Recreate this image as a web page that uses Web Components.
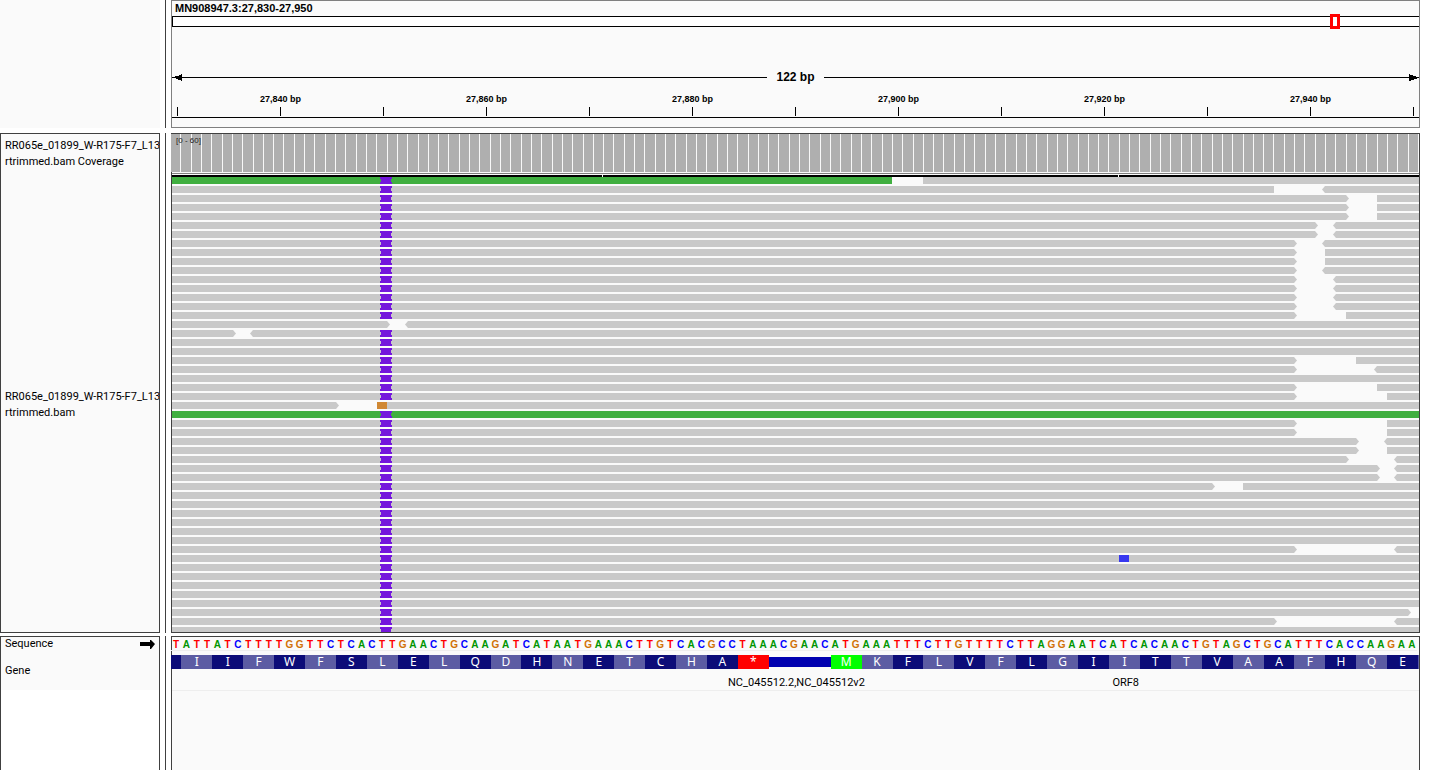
<!DOCTYPE html>
<html lang="en">
<head>
<meta charset="utf-8">
<title>Genome browser</title>
<style>
  body {
    margin: 0;
    background: #fff;
    color: #000;
    font: 11px/16px Roboto, Arial, sans-serif;
  }
</style>
</head>
<body>
<genome-browser></genome-browser>

<script>
const define = (name, css, render) => customElements.define(name, class extends HTMLElement {
  connectedCallback() {
    if (this.shadowRoot) return;
    this.attachShadow({ mode: "open" }).innerHTML = `<style>${css}</style>${render(this)}`;
  }
});

/* A row of the browser: name box, splitter line, data box. */
define("track-panel", `
  :host { display: grid; grid-template-columns: 160px 1px minmax(0, 1fr); column-gap: 5px; --line: #404040; }
  .names, .data { box-sizing: border-box; border: 1px solid var(--line); background: #fafafa; min-width: 0; }
  .names { display: flex; flex-direction: column; overflow: hidden; }
  .split { background: #404040; }
  :host([kind="header"]) { --line: #808080; }
  :host([kind="header"]) .names { border-color: #fafafa; }
  :host([kind="features"]) { flex: 1; }
  :host([kind="features"]) .names { background: #fff; }
  :host([kind="features"]) .names, :host([kind="features"]) .data { border-bottom: 0; }
`, () => `
  <div class="names"><slot name="names"></slot></div>
  <div class="split"></div>
  <div class="data"><slot></slot></div>`);

define("track-name", `
  :host { display: flex; align-items: center; justify-content: space-between; box-sizing: border-box;
          padding: 0 4px; background: #fafafa; white-space: nowrap; }
  :host([track="coverage"]) { height: 39px; margin-bottom: 4px; }
  :host([track="reads"]) { height: 455px; }
  :host([track="sequence"]) { height: 14px; }
  :host([track="gene"]) { height: 39px; }
  svg { display: block; width: 15px; height: 9px; flex: none; }
`, el => `<span><slot></slot></span>${el.getAttribute("track") === "sequence"
    ? `<svg viewBox="0 0 15 9"><path d="M0 2h10V0h1l4 4-4 5h-1V6H0z"/></svg>` : ""}`);

/* Chromosome overview with the marked window. */
define("chromosome-overview", `
  :host { display: block; }
  h1 { margin: 0; padding: 0 3px; font: bold 11px/15px "Liberation Sans", Arial, sans-serif; }
  .bar { position: relative; height: 9px; background: #fff; border: 1px solid #000; border-right: 0; }
  .window { position: absolute; left: 92.85%; top: -3px; width: 4px; height: 9px; border: 3px solid #f00; }
`, () => `<h1><slot></slot></h1><div class="bar"><div class="window"></div></div>`);

/* Span arrow and position ticks. */
const LABELS = ["", "27,840 bp", "", "27,860 bp", "", "27,880 bp", "", "27,900 bp", "", "27,920 bp", "", "27,940 bp", ""];
define("position-ruler", `
  :host { display: block; padding: 42px 0 9px; font-family: "Liberation Sans", Arial, sans-serif; font-weight: bold; }
  .span { display: flex; align-items: center; height: 16px; }
  .span i { flex: 1; height: 1px; background: #000; }
  .span b { width: 57px; text-align: center; font-size: 12px; }
  .span svg { width: 10px; height: 7px; flex: none; }
  .ticks { display: flex; justify-content: space-between; padding: 6px 5px 1px; border-bottom: 1px solid #000; }
  .tick { width: 1px; display: flex; flex-direction: column; align-items: center; white-space: nowrap; font-size: 9px; }
  .tick span { height: 16px; }
  .tick i { width: 1px; height: 9px; background: #000; }
`, () => `
  <div class="span">
    <svg viewBox="0 0 10 7"><path d="M0 3h3V2h4V1h2V0h1v7H9V6H6V5H4V4H0z"/></svg><i></i>
    <b><slot></slot></b>
    <i></i><svg viewBox="0 0 10 7"><path d="M10 3H7V2H4V1H1V0H0v7h2V6h3V5h3V4h2z"/></svg>
  </div>
  <div class="ticks">${LABELS.map(t => `<div class="tick"><span>${t}</span><i></i></div>`).join("")}</div>`);

define("coverage-track", `
  :host { display: block; position: relative; }
  .bars { height: 38px; display: flex; overflow: hidden; margin-left: -1px; background: #afafaf; }
  .bars i { flex: 1 1 0; box-sizing: border-box; border-right: 1px solid #f8f8f8; }
  .bars i:last-child { flex: 0 0 1px; border: 0; }
  .rule { height: 1px; margin: 1px 0; background: #808080; }
  .edge { display: flex; height: 2px; gap: 1px; }
  .edge i { background: #000; }
  span { position: absolute; left: 4px; top: 0; font: 8px/13px "Liberation Sans", Arial, sans-serif; color: #222; }
`, () => `
  <div class="bars">${"<i></i>".repeat(122)}</div>
  <div class="rule"></div>
  <div class="edge"><i style="flex:430"></i><i style="flex:515"></i><i style="flex:300"></i></div>
  <span><slot></slot></span>`);

/* Aligned reads. A gap is [end of left read, its tip, start of right read, its tip]. */
const FROM = 172, TO = 1419;
const full = {};
const gap = (end, endTip, start, startTip, extra) => ({ end, endTip, start, startTip, ...extra });
const toFlat = (a, b) => gap(a, 1, b, 0);
const toTip = (a, b, x) => gap(a, 1, b, 1, x);
const times = (n, v) => Array(n).fill(v);
const READS = [
  gap(892, 0, 923, 0, { left: "green" }),
  gap(1274, 0, 1322, 1),
  ...times(3, toFlat(1349, 1377)),
  ...times(2, toTip(1318, 1333)),
  toTip(1297, 1322), ...times(2, toFlat(1297, 1325)), toTip(1297, 1322),
  ...times(4, toTip(1297, 1333)),
  toFlat(1297, 1346),
  toTip(390, 405, { plain: true }),
  toTip(236, 250),
  full, full,
  toFlat(1297, 1356), toTip(1297, 1374),
  full,
  toFlat(1297, 1377), toFlat(1297, 1387),
  gap(339, 1, 377, 0, { plain: true, mark: [377, "orange"] }),
  { left: "green" },
  ...times(2, toFlat(1297, 1387)),
  toTip(1359, 1384), toFlat(1359, 1387), toTip(1349, 1394),
  ...times(2, toTip(1380, 1394)),
  toFlat(1215, 1243),
  ...times(6, full),
  toTip(1297, 1394),
  { mark: [1119, "blue"] },
  ...times(5, full),
  gap(1411, 1, 1419, 0),
  toTip(1277, 1394),
  full
];
const at = x => `${(x - FROM) / (TO - FROM) * 100}%`;
function readRow(r) {
  const end = r.end ?? TO;
  let row = `<i class="read ${r.left ?? ""} ${r.endTip ? "fwd" : ""}" style="flex-grow:${end - FROM}"></i>`;
  if (r.end) row += `<i style="flex-grow:${r.start - end}"></i>`;
  if (r.end && r.start < TO) row += `<i class="read ${r.startTip ? "rev" : ""}" style="flex-grow:${TO - r.start}"></i>`;
  if (!r.plain) row += `<b class="insertion" style="left:${at(380)}"></b>`;
  if (r.mark) row += `<b class="${r.mark[1]}" style="left:${at(r.mark[0])}"></b>`;
  return `<div class="row">${row}</div>`;
}
define("read-track", `
  :host { display: flex; flex-direction: column; gap: 2px; height: 455px; overflow: hidden; }
  .row { position: relative; display: flex; flex: none; height: 7px; }
  .row:first-child { box-shadow: inset 0 1px #000; }
  .row:first-child .read { box-shadow: inset 0 1px rgba(0, 0, 0, .5); }
  i { flex: 0 1 0; }
  .read { background: #c9c9c9; }
  .green { background: #40af40; }
  .fwd { clip-path: polygon(0 0, calc(100% - 3px) 0, 100% 50%, calc(100% - 3px) 100%, 0 100%); }
  .rev { clip-path: polygon(3px 0, 100% 0, 100% 100%, 3px 100%, 0 50%); }
  b { position: absolute; top: 0; width: 10px; height: 7px; }
  .insertion { width: 12px; background: #7417dc;
    clip-path: polygon(0 0, 12px 0, 12px 2px, 11px 2px, 11px 5px, 12px 5px, 12px 7px, 0 7px, 0 5px, 1px 5px, 1px 2px, 0 2px); }
  .orange { background: #d08833; }
  .blue { background: #3838f0; }
`, () => READS.map(readRow).join(""));

define("sequence-track", `
  :host { display: flex; height: 13px; margin: 0 2px 0 -1px; border-bottom: 1px solid #eee;
          font: bold 10px/16px "Liberation Sans", Arial, sans-serif; }
  span { flex: 1 1 0; min-width: 0; text-align: center; }
  .A { color: #009600; } .C { color: #00f; } .G { color: #d17105; } .T { color: #f00; }
`, el => [...el.getAttribute("bases")].map(b => `<span class="${b}">${b}</span>`).join(""));

/* Translated gene: codons are three bases wide, "-" is a run of six untranslated bases. */
define("gene-track", `
  :host { display: block; height: 39px; border-bottom: 1px solid #eee; }
  .codons { display: flex; align-items: center; height: 14px; padding-top: 4px; margin-left: -1px; overflow: hidden;
            color: #fff; font: 12px/14px "Noto Sans", sans-serif; }
  .codons span { flex: 3 1 0; height: 14px; text-align: center; background: #0c0c78; }
  .codons .alt { background: #5c5ca3; }
  .codons .stop { background: #f00; }
  .codons .start { background: #0f0; }
  .codons .thin { flex-grow: 6; height: 10px; background: #0000b0; }
  .codons .cut { flex-grow: 1; }
  .codons .rest { flex: 0 0 1px; }
  .names { display: flex; justify-content: space-between; padding: 6px 280px 0 556px; }
`, el => {
  let alt = false;
  const cells = [...el.getAttribute("protein")].map(a => {
    if (a === "-") return `<span class="thin"></span>`;
    alt = !alt;
    if (a === "M") alt = false;
    const kind = a === "*" ? "stop" : a === "M" ? "start" : alt ? "alt" : "";
    return `<span class="${kind}">${a}</span>`;
  });
  return `<div class="codons"><span class="cut"></span>${cells.join("")}<span class="rest alt"></span></div>
    <div class="names"><slot></slot></div>`;
});

define("genome-browser", `
  :host { display: flex; flex-direction: column; box-sizing: border-box; min-height: 100vh; padding-right: 17px; }
  .header { margin-bottom: 5px; }
  .alignment { margin-bottom: 3px; }
`, () => `
  <track-panel class="header" kind="header">
    <chromosome-overview>MN908947.3:27,830-27,950</chromosome-overview>
    <position-ruler>122 bp</position-ruler>
  </track-panel>
  <track-panel class="alignment">
    <track-name slot="names" track="coverage">RR065e_01899_W-R175-F7_L13<br>rtrimmed.bam Coverage</track-name>
    <track-name slot="names" track="reads">RR065e_01899_W-R175-F7_L13<br>rtrimmed.bam</track-name>
    <coverage-track>[0 - 60]</coverage-track>
    <read-track></read-track>
  </track-panel>
  <track-panel kind="features">
    <track-name slot="names" track="sequence">Sequence</track-name>
    <track-name slot="names" track="gene">Gene</track-name>
    <sequence-track bases="TATTATCTTTTGGTTCTCACTTGAACTGCAAGATCATAATGAAACTTGTCACGCCTAAACGAACATGAAATTTCTTGTTTTCTTAGGAATCATCACAACTGTAGCTGCATTTCACCAAGAA"></sequence-track>
    <gene-track protein="IIFWFSLELQDHNETCHA*-MKFLVFLGIITTVAAFHQE"><span>NC_045512.2,NC_045512v2</span><span>ORF8</span></gene-track>
  </track-panel>`);
</script>
</body>
</html>
